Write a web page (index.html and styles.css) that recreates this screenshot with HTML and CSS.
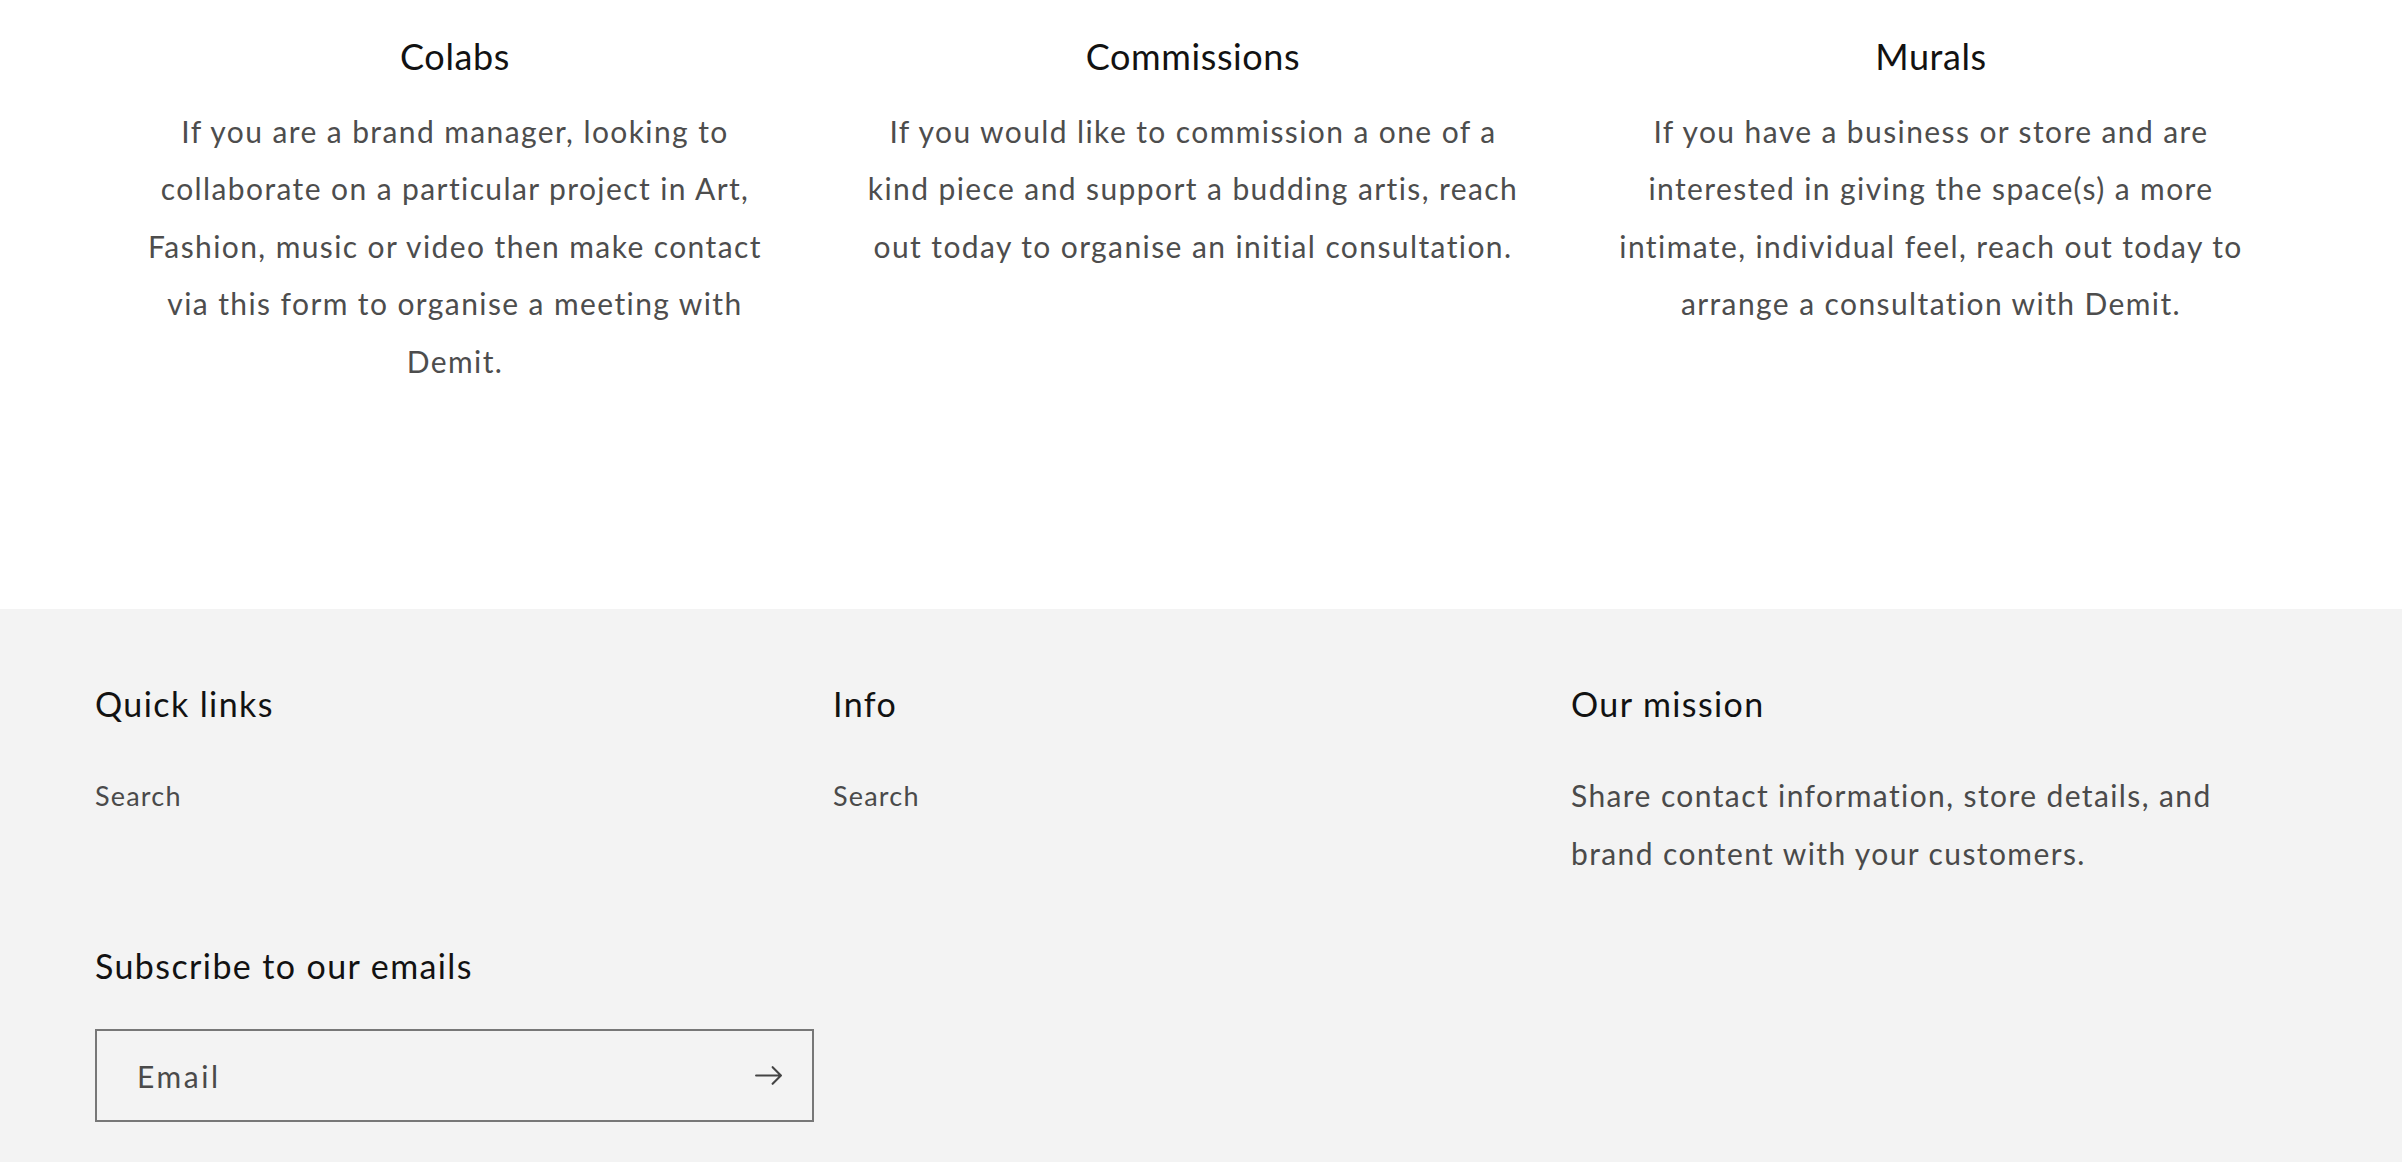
FILE: index.html
```html
<!DOCTYPE html>
<html lang="en">
<head>
<meta charset="utf-8">
<title>Contact</title>
<link rel="stylesheet" href="styles.css">
</head>
<body>
<section class="multicolumn">
  <div class="card">
    <h3 class="card-title">Colabs</h3>
    <p class="card-text">If you are a brand manager, looking to<br>collaborate on a particular project in Art,<br>Fashion, music or video then make contact<br>via this form to organise a meeting with<br>Demit.</p>
  </div>
  <div class="card">
    <h3 class="card-title">Commissions</h3>
    <p class="card-text">If you would like to commission a one of a<br>kind piece and support a budding artis, reach<br>out today to organise an initial consultation.</p>
  </div>
  <div class="card">
    <h3 class="card-title">Murals</h3>
    <p class="card-text">If you have a business or store and are<br>interested in giving the space(s) a more<br>intimate, individual feel, reach out today to<br>arrange a consultation with Demit.</p>
  </div>
</section>
<footer class="footer">
  <div class="footer-blocks">
    <div class="footer-block">
      <h2 class="footer-heading">Quick links</h2>
      <ul class="footer-list"><li><a class="footer-link" href="#">Search</a></li></ul>
    </div>
    <div class="footer-block">
      <h2 class="footer-heading">Info</h2>
      <ul class="footer-list"><li><a class="footer-link" href="#">Search</a></li></ul>
    </div>
    <div class="footer-block">
      <h2 class="footer-heading">Our mission</h2>
      <p class="footer-text">Share contact information, store details, and<br>brand content with your customers.</p>
    </div>
  </div>
  <div class="newsletter">
    <h2 class="footer-heading">Subscribe to our emails</h2>
    <form class="newsletter-field">
      <span class="newsletter-label">Email</span>
      <button class="newsletter-button" type="button" aria-label="Subscribe">
        <svg class="arrow" viewBox="0 0 14 10" fill="none"><path fill-rule="evenodd" clip-rule="evenodd" d="M8.537.808a.5.5 0 01.817-.162l4 4a.5.5 0 010 .708l-4 4a.5.5 0 11-.708-.708L11.793 5.5H1a.5.5 0 010-1h10.793L8.646 1.354a.5.5 0 01-.109-.546z" fill="#444"/></svg>
      </button>
    </form>
  </div>
</footer>
</body>
</html>
```
FILE: styles.css
```css
* { box-sizing: border-box; }
html, body { margin: 0; padding: 0; overflow: hidden; }
body {
  font-family: Lato, "Liberation Sans", sans-serif;
  background: #ffffff;
  color: #121212;
}
.multicolumn {
  display: grid;
  grid-template-columns: repeat(3, 738px);
  padding: 32.5px 0 0 86px;
  height: 609px;
}
.card { text-align: center; }
.card-title {
  margin: 0;
  font-size: 36px;
  font-weight: 400;
  line-height: 46.8px;
  letter-spacing: 0.6px;
  color: #121212;
}
.card-text {
  margin: 23.5px 0 0;
  font-size: 30px;
  line-height: 57.5px;
  letter-spacing: 1.4px;
  color: #4d4d4d;
}
.footer {
  background: #f3f3f3;
  padding: 72px 0 0 95px;
  height: 553px;
}
.footer-blocks {
  display: grid;
  grid-template-columns: repeat(3, 678px);
  column-gap: 60px;
}
.footer-heading {
  margin: 0;
  font-size: 34px;
  font-weight: 400;
  line-height: 46.8px;
  letter-spacing: 1.4px;
  color: #121212;
}
.footer-list {
  list-style: none;
  margin: 44.5px 0 0;
  padding: 0;
}
.footer-link {
  font-size: 27px;
  line-height: 48.6px;
  letter-spacing: 1.2px;
  color: #4a4a4a;
  text-decoration: none;
}
.footer-text {
  margin: 39.5px 0 0;
  font-size: 30px;
  line-height: 57.5px;
  letter-spacing: 1.4px;
  color: #4a4a4a;
}
.newsletter { margin-top: 60.5px; }
.newsletter-field {
  margin-top: 39.5px;
  width: 719px;
  height: 93px;
  border: 2px solid #777777;
  display: flex;
  align-items: center;
  justify-content: space-between;
  padding-left: 40px;
}
.newsletter-label {
  font-size: 30px;
  letter-spacing: 2.6px;
  color: #4a4a4a;
}
.newsletter-button {
  width: 88px;
  height: 100%;
  border: 0;
  background: transparent;
  padding: 0;
  display: flex;
  align-items: center;
  justify-content: center;
}
.arrow { width: 29px; height: 21px; }
```
